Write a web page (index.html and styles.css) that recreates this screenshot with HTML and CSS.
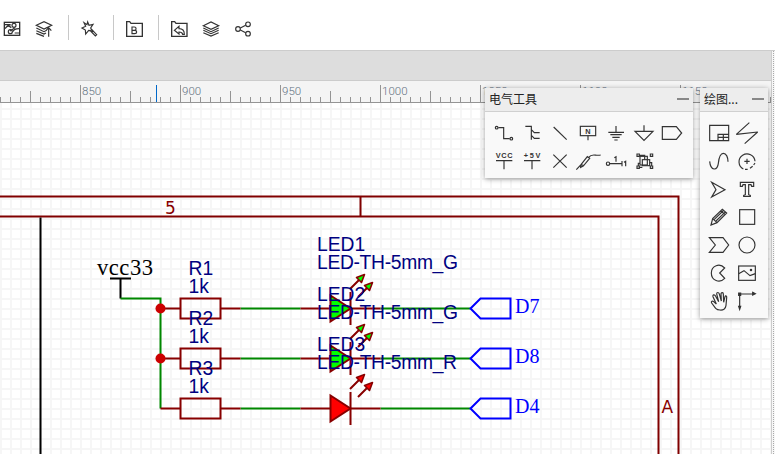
FILE: index.html
```
<!DOCTYPE html>
<html lang="zh-CN">
<head>
<meta charset="utf-8">
<title>原理图</title>
<link rel="stylesheet" href="styles.css">
</head>
<body>
<div class="app">
<header class="toolbar">
  <svg class="tool" viewBox="0 51 72 72"><rect x="13" y="67" width="46" height="39" stroke-width="4"/><path d="M14 74H32M44 84L30 93M34 83L22 75M44 99H58"/><circle cx="42" cy="76" r="6"/><circle cx="31" cy="95" r="6"/><path d="M15 86c5-8 12-10 17-7M57 86c-7 0-16 1-18 9"/></svg>
  <svg class="tool" viewBox="96 51 72 72"><path d="M109 76L132 65 155 76 132 87ZM109 84L132 95 140 91M109 92L132 102 138 99M109 100L132 109M146 110V84M138 92L146 83 154 92"/></svg>
  <i class="sep"></i>
  <svg class="tool" viewBox="231 51 72 72"><path d="M263 66L267 76 279 73 272 84 278 94 266 91 257 102 256 90 246 84 257 79 252 68 261 74ZM269 90L286 108 290 104 275 88"/></svg>
  <i class="sep"></i>
  <svg class="tool" viewBox="366 51 72 72"><path d="M380 109V65H389L393 70H427V109Z" stroke-width="4"/><path d="M396 81V101H404C412 101 412 91 404 91H396H403C410 91 410 81 403 81Z"/></svg>
  <i class="sep"></i>
  <svg class="tool" viewBox="501 51 72 72"><path d="M515 109V65H524L528 70H561V109Z" stroke-width="4"/><path d="M523 91L537 79V86C548 86 553 92 553 103H548C547 97 543 96 537 96V102Z"/></svg>
  <svg class="tool" viewBox="597 51 72 72"><path d="M610 77L633 66 656 77 633 88ZM610 84L633 95 656 84M610 91L633 101 656 91M610 98L633 108 656 98"/></svg>
  <svg class="tool" viewBox="693 51 72 72"><circle cx="714" cy="87" r="7"/><circle cx="744" cy="73" r="7"/><circle cx="744" cy="101" r="7"/><path d="M721 84L737 76M721 90L737 98"/></svg>
</header>
<div class="tabs"></div>
<div class="ruler">
  <div class="ticks minor"></div><div class="ticks middle"></div><div class="ticks major"></div>
  <div class="numbers"><span>850</span><span>900</span><span>950</span><span>1000</span><span>1050</span><span>1100</span><span>1150</span></div>
  <i class="cursor"></i>
</div>
<main class="canvas">
<svg class="sheet" viewBox="0 103 771 351">
  <defs>
    <g id="resistor"><path class="part" d="M160.5 308.5H180.5M220.5 308.5H240.5"/><rect class="part" x="180.5" y="298.5" width="40" height="20"/></g>
    <g id="led"><path class="part body" d="M330.5 295.5L350.5 308.5 330.5 321.5Z"/><path class="part" d="M300.5 308.5H330.5M350.5 308.5H380.5M350.5 292V325M350 289L360 279M358 297L368 287"/><path class="part body head-fill" d="M364.500 274.500L361.500 282.500 356.500 277.500ZM372.500 282.500L369.500 290.500 364.500 285.500Z"/></g>
    <path id="port" d="M470.5 308.5L480.5 298.5H510.5V318.500H480.5Z"/>
  </defs>
  <g class="frame"><path d="M0 196.500H678.500V454M0 216.500H658.500V454M360.500 196.500V216.500"/></g>
  <path class="black" d="M40.500 217.500V454M110 278.500H131M120.500 278.500V298.500"/>
  <path class="wire" d="M120.500 298.500H160.500V408.500M240.500 308.500H300.500M240.500 358.500H300.500M240.500 408.500H300.500M380.500 308.500H470.500M380.500 358.500H470.500M380.500 408.500H470.500"/>
  <use href="#resistor"/><use href="#resistor" y="50"/><use href="#resistor" y="100"/>
  <g class="green"><use href="#led"/><use href="#led" y="50"/></g><g class="red"><use href="#led" y="100"/></g>
  <g class="port"><use href="#port"/><use href="#port" y="50"/><use href="#port" y="100"/></g>
  <circle class="dot" cx="160.500" cy="308.500" r="5"/><circle class="dot" cx="160.500" cy="358.500" r="5"/>
  <g class="frame-text"><text x="165" y="213.500">5</text><text x="661.500" y="412.500">A</text></g>
  <g class="label">
    <text x="188.500" y="275">R1</text><text x="188.500" y="293">1k</text>
    <text x="188.500" y="325">R2</text><text x="188.500" y="343">1k</text>
    <text x="188.500" y="375">R3</text><text x="188.500" y="393">1k</text>
    <text x="317" y="251">LED1</text><text x="317" y="269" textLength="141">LED-TH-5mm_G</text>
    <text x="317" y="301">LED2</text><text x="317" y="319" textLength="141">LED-TH-5mm_G</text>
    <text x="317" y="351">LED3</text><text x="317" y="369" textLength="140">LED-TH-5mm_R</text>
  </g>
  <text class="net" x="97" y="274.500" textLength="56">vcc33</text>
  <g class="net blue"><text x="515" y="313">D7</text><text x="515" y="363">D8</text><text x="515" y="413">D4</text></g>
</svg>
</main>
<aside class="side"></aside>

<section class="panel electric">
  <header class="head"><span>电气工具</span><i class="min"></i></header>
  <div class="icons">
    <svg viewBox="30 114 84 84"><circle cx="50" cy="143" r="4"/><path d="M55 143H71V176H89"/><circle cx="94" cy="176" r="4"/></svg>
    <svg viewBox="114 114 84 84"><path d="M136 139H154V179M154 149L163 158H179M154 166L163 175H179"/></svg>
    <svg viewBox="198 114 84 84"><path d="M221 141L260 179"/></svg>
    <svg viewBox="282 114 84 84"><rect x="301" y="139" width="46" height="28"/><path d="M324 167V181"/><text x="316" y="161">N</text></svg>
    <svg viewBox="366 114 84 84"><path d="M408 138V157M385 157H432M391 164H425M397 172H419M403 180H413"/></svg>
    <svg viewBox="450 114 84 84"><path d="M492 136V154M465 154H519L492 181Z"/></svg>
    <svg viewBox="534 114 84 84"><path d="M547 140H589L605 159 589 178H547Z"/></svg>
    <svg viewBox="30 198 84 84"><text x="47" y="233" textLength="51">VCC</text><path d="M48 242H97M72 242V268"/></svg>
    <svg viewBox="114 198 84 84"><text x="131" y="233" textLength="50">+5V</text><path d="M132 242H181M156 242V268"/></svg>
    <svg viewBox="198 198 84 84"><path d="M220 224L260 263M260 224L220 263"/></svg>
    <svg viewBox="282 198 84 84"><path d="M289 269L303 254 322 230 329 235 311 257 303 254M303 254L302 262 311 257M326 232C336 218 347 229 362 225"/></svg>
    <svg viewBox="366 198 84 84"><circle cx="384" cy="251" r="5"/><path d="M389 251H426M426 243V259M403 233L408 230V245M432 247L437 244V259"/></svg>
    <svg viewBox="450 198 84 84"><rect x="480" y="229" width="22" height="26"/><rect x="487" y="239" width="22" height="18"/><path d="M471 222h7v7h-7zM511 222h7v7h-7zM471 258h7v7h-7zM511 258h7v7h-7zM478 226H494V239M509 248H515V258M480 250H475V258M478 262H487"/></svg>
  </div>
</section>

<section class="panel drawing">
  <header class="head"><span>绘图...</span><i class="min"></i></header>
  <div class="icons">
    <svg viewBox="90 222 84 84"><path d="M104 241H161V287H104ZM129 287V268H161M129 277H161M145 268V287"/></svg>
    <svg viewBox="174 222 84 84"><path stroke-linejoin="bevel" d="M223 233L184 268 248 261 209 296"/></svg>
    <svg viewBox="90 306 84 84"><path d="M104 349C107 379 127 378 130 355C132 336 135 325 145 325C154 325 159 337 159 350"/></svg>
    <svg viewBox="174 306 84 84"><path d="M205 372A24 24 0 1 1 240 349M210 373H218M225 370L233 364M236 360L240 354M208 349H224M216 341V357"/></svg>
    <svg viewBox="45 -15 84 84"><path d="M65 7L105 29 65 51 78 29Z"/></svg>
    <svg viewBox="129 -15 84 84"><path d="M151 7H191V19H185L183 14H176V44L181 46V49H161V46L166 44V14H159L157 19H151Z"/></svg>
    <svg viewBox="45 69 84 84"><path d="M63 135L68 116 97 88 110 99 81 128ZM68 116L81 128M73 118L102 90M78 123L107 95M92 92L105 104M64 130L69 134"/></svg>
    <svg viewBox="129 69 84 84"><rect x="149" y="89" width="45" height="44"/></svg>
    <svg viewBox="45 153 84 84"><path d="M58 173H99L116 195 99 217H58L76 195Z"/></svg>
    <svg viewBox="129 153 84 84"><circle cx="171" cy="195" r="24"/></svg>
    <svg viewBox="45 237 84 84"><path d="M104 264C89 248 64 257 64 279C64 302 89 311 104 295L89 279Z"/></svg>
    <svg viewBox="129 237 84 84"><rect x="146" y="258" width="50" height="43"/><path d="M146 281L162 272 180 287 196 281"/><circle class="solid" cx="183" cy="270" r="2"/></svg>
    <svg viewBox="45 321 84 84"><path d="M77 385L65 369C62 363 68 362 71 365L79 372 69 350C67 344 74 342 77 349L86 365 80 342C80 336 86 336 88 342L94 363 93 341C94 336 100 337 100 342L101 367 105 350C107 345 111 348 110 353L108 376C107 387 99 391 90 390C84 390 80 388 77 385Z"/></svg>
    <svg viewBox="129 321 84 84"><path d="M149 342V381M149 342H188"/><path class="solid" d="M146 379H152L149 388ZM188 337L196 341 188 345ZM146 339H152V346H146Z"/></svg>
  </div>
</section>
</div>
</body>
</html>
```
FILE: styles.css
```
* { box-sizing: border-box; }
body { margin: 0; background: #fff; font-family: "Liberation Sans", "Noto Sans CJK SC", sans-serif; overflow: hidden; }
.app {
  position: relative;
  display: grid;
  grid-template: 50px 31px 22px 351px / 771px 4px;
  width: 775px;
  height: 454px;
}
.toolbar { grid-column: 1 / 3; display: flex; align-items: flex-start; gap: 8px; padding-top: 15px; }
svg { display: block; fill: none; stroke: #333; stroke-width: 3.5; }
.tool { width: 24px; height: 24px; margin-top: 2px; }
.sep { width: 1px; height: 25px; margin-left: 4px; background: #c8c8c8; }
.tabs { background: #ddd; border: solid #ccc; border-width: 1px 0; }
.ruler { position: relative; grid-area: 3 / 1; overflow: hidden; background: #f4f4f4; border-bottom: 1px solid #949494; }
.ticks { position: absolute; left: 0; right: 0; bottom: 0; background-repeat: repeat-x; background-image: linear-gradient(90deg, #949494 1px, transparent 1px); }
.minor { height: 5px; background-size: 10px 100%; }
.middle { height: 11px; background-size: 100px 100%; background-position: 30px 0; }
.major { height: 17px; background-size: 100px 100%; background-position: 80px 0; }
.numbers { display: flex; width: 790px; padding-left: 82px; font: 300 11.5px/16px Roboto, sans-serif; color: #5f7080; padding-top: 2px; }
.numbers span { flex: 0 0 100px; }
.cursor { position: absolute; left: 156px; bottom: 0; width: 1px; height: 17px; background: #0068c9; }
.canvas {
  grid-area: 4 / 1;
  background-color: #fff;
  background-image: linear-gradient(90deg, #f6f6f6 2px, transparent 2px), linear-gradient(#f6f6f6 2px, transparent 2px);
  background-size: 10px 10px;
  background-position: 0 5px;
}
.side { grid-area: 2 / 2 / 5 / 3; border-left: 1px solid #ccc; background: #f7f7f7 repeating-linear-gradient(#aaa 0 1px, transparent 1px 2px) 1px 0 / 1px 100% no-repeat; border-top: 1px solid #ccc; }
.sheet { width: 771px; height: 351px; stroke-width: 2; }
.frame { stroke: #800000; }
.part { stroke: #880000; }
.head-fill { stroke-width: 1.6; stroke-linejoin: round; }
.wire { stroke: #008800; }
.black { stroke: #000; }
.green { fill: #00ff00; }
.red { fill: #ff0000; }
.port { stroke: #0000ff; }
.dot { fill: #cc0000; stroke: none; }
.frame-text { fill: #880000; stroke: none; font: 17px "DejaVu Sans", sans-serif; }
.label { fill: #000080; stroke: none; font: 19.3px "Liberation Sans", sans-serif; }
.net { fill: #000; stroke: none; font: 22.6px "Liberation Serif", serif; }
.blue { fill: #0000ff; font-size: 20px; }
.panel { position: absolute; top: 88px; background: #f9f9f9; box-shadow: 0 1px 5px rgba(0, 0, 0, .4); }
.electric { left: 485px; width: 208px; height: 90px; }
.drawing { left: 700px; width: 68px; height: 230px; }
.head { display: flex; justify-content: space-between; height: 24px; padding: 0 4px 0 4px; background: #ededed; border-bottom: 1px solid #d0d0d0; font: 12px/21px "Noto Sans CJK SC", sans-serif; color: #222; }
.min { width: 12px; height: 2px; margin-top: 10px; background: #888; }
.icons { display: grid; grid-template-columns: repeat(7, 28px); padding: 6px 0 0 5px; }
.drawing .icons { grid-template-columns: repeat(2, 28px); padding-top: 7px; }
.icons svg { width: 28px; height: 28px; }
.icons text { fill: #333; stroke: none; font: bold 22px "Liberation Sans", sans-serif; }
.icons .solid { fill: #333; }
```
